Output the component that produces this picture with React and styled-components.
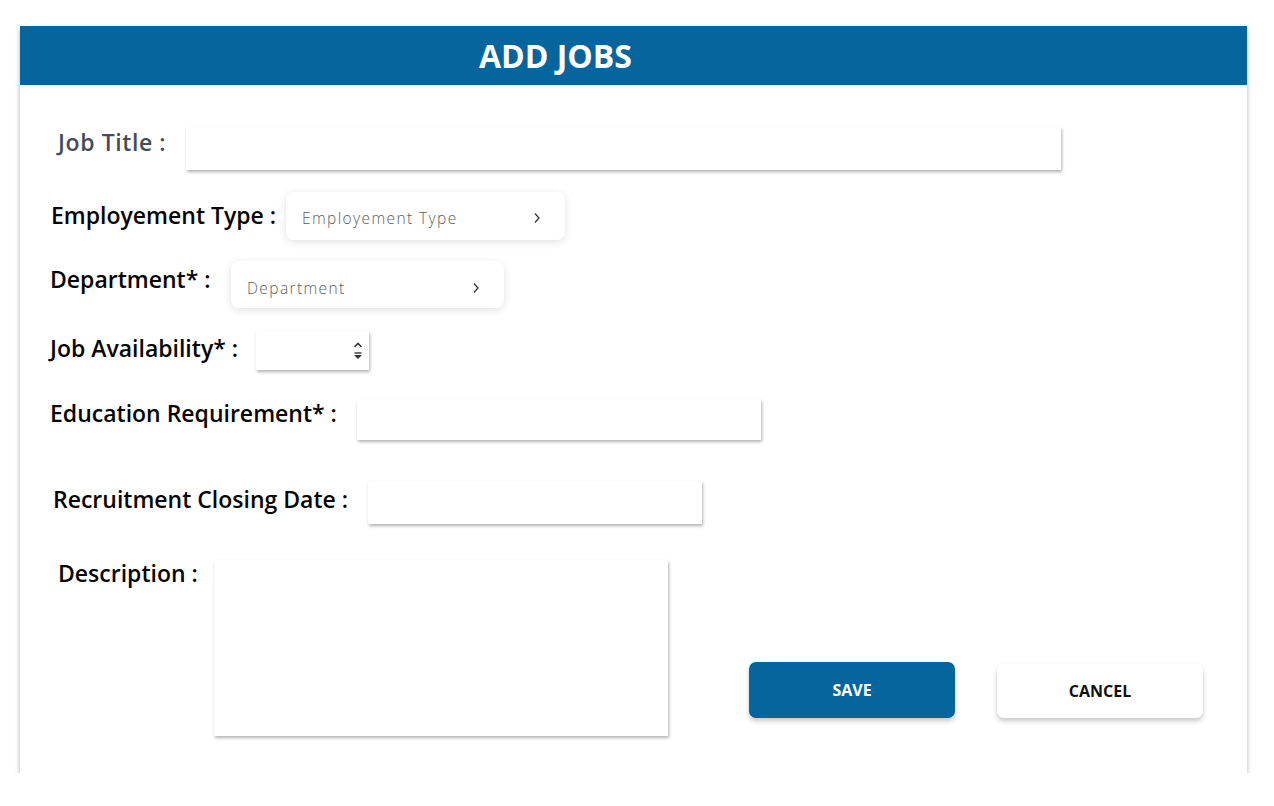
import React from 'react';
import styled, { createGlobalStyle } from 'styled-components';

const GlobalStyle = createGlobalStyle`
    body {
        margin: 0;
        background: #ffffff;
        font-family: 'Open Sans', sans-serif;
    }
`;

const Card = styled.div`
    width: 1227px;
    margin: 26px 0 0 20px;
    background: #ffffff;
    box-shadow: 0 3px 5px rgba(0, 0, 0, 0.3);
`;

const Header = styled.div`
    height: 59px;
    background-color: #05659c;
    display: flex;
    align-items: center;
    padding-left: 459px;
    color: #ffffff;
    font-family: 'Open Sans', sans-serif;
    font-weight: 700;
    font-size: 32px;
`;

const Body = styled.div`
    display: flex;
    flex-direction: column;
    padding: 0 0 37px 0;
`;

const Row = styled.div`
    display: flex;
    align-items: center;
    margin-top: ${({ $top }) => $top}px;
    padding-left: ${({ $left }) => $left}px;
`;

const Label = styled.label`
    flex: none;
    width: ${({ $width }) => $width}px;
    margin-bottom: ${({ $lift }) => $lift || 0}px;
    font-size: 23px;
    line-height: 1.2;
    font-weight: 600;
    letter-spacing: ${({ $muted }) => ($muted ? 0.6 : 0)}px;
    color: ${({ $muted }) => ($muted ? '#464c57' : '#050505')};
    white-space: nowrap;
`;

const TextBox = styled.div`
    flex: none;
    width: ${({ $width }) => $width}px;
    height: ${({ $height }) => $height}px;
    background: #ffffff;
    box-shadow: 1px 2px 3px rgba(0, 0, 0, 0.3);
    position: relative;
`;

const Select = styled.div`
    flex: none;
    width: ${({ $width }) => $width}px;
    height: ${({ $height }) => $height}px;
    box-sizing: border-box;
    padding: ${({ $pt }) => $pt || 0}px 24px 0 16px;
    display: flex;
    align-items: center;
    justify-content: space-between;
    background: #ffffff;
    border-radius: 8px;
    box-shadow: 0 2px 8px rgba(0, 0, 0, 0.12);
    font-family: 'Open Sans', sans-serif;
    font-weight: 300;
    font-size: 15.5px;
    letter-spacing: 1.4px;
    color: #5c5c5c;
`;

const Spinner = styled.svg`
    position: absolute;
    right: 6px;
    top: 10px;
`;

const Bottom = styled.div`
    display: flex;
    align-items: flex-start;
    margin-top: 36px;
    padding-left: 38px;
`;

const Buttons = styled.div`
    display: flex;
    align-items: flex-end;
    gap: 42px;
    margin-left: 81px;
    margin-top: 102px;
`;

const Button = styled.button`
    width: 206px;
    height: ${({ $primary }) => ($primary ? 56 : 54)}px;
    border: none;
    border-radius: 7px;
    background-color: ${({ $primary }) => ($primary ? '#05659c' : '#ffffff')};
    color: ${({ $primary }) => ($primary ? '#ffffff' : '#111111')};
    font-family: 'Open Sans', sans-serif;
    font-weight: 700;
    font-size: 16px;
    box-shadow: 0 3px 5px rgba(0, 0, 0, 0.22);
    cursor: pointer;
`;

const Chevron = () => (
    <svg width="8" height="12" viewBox="0 0 8 12">
        <path d="M2 1.5 L6 6 L2 10.5" fill="none" stroke="#333" strokeWidth="1.3" />
    </svg>
);

export default function App() {
    return (
        <>
            <GlobalStyle />
            <Card>
                <Header>ADD JOBS</Header>
                <Body>
                    <Row $top={42} $left={38}>
                        <Label $width={128} $lift={11} $muted>Job Title :</Label>
                        <TextBox $width={875} $height={43} />
                    </Row>
                    <Row $top={22} $left={31}>
                        <Label $width={235} $lift={1}>Employement Type :</Label>
                        <Select $width={279} $height={48} $pt={4}>
                            Employement Type
                            <Chevron />
                        </Select>
                    </Row>
                    <Row $top={21} $left={30}>
                        <Label $width={181} $lift={10}>Department* :</Label>
                        <Select $width={273} $height={47} $pt={6}>
                            Department
                            <Chevron />
                        </Select>
                    </Row>
                    <Row $top={23} $left={30}>
                        <Label $width={206} $lift={3}>Job Availability* :</Label>
                        <TextBox $width={113} $height={39}>
                            <Spinner width="10" height="20" viewBox="0 0 10 20">
                                <path d="M1.5 6 L5 2.5 L8.5 6" fill="none" stroke="#333" strokeWidth="1.6" />
                                <path d="M1.5 12 H8.5" stroke="#333" strokeWidth="1.4" />
                                <path d="M1 14 H9 L5 18 Z" fill="#333" />
                            </Spinner>
                        </TextBox>
                    </Row>
                    <Row $top={29} $left={30}>
                        <Label $width={307} $lift={12}>Education Requirement* :</Label>
                        <TextBox $width={404} $height={41} />
                    </Row>
                    <Row $top={41} $left={33}>
                        <Label $width={315} $lift={5}>Recruitment Closing Date :</Label>
                        <TextBox $width={334} $height={43} />
                    </Row>
                    <Bottom>
                        <Label $width={156}>Description :</Label>
                        <TextBox $width={454} $height={176} />
                        <Buttons>
                            <Button $primary>SAVE</Button>
                            <Button>CANCEL</Button>
                        </Buttons>
                    </Bottom>
                </Body>
            </Card>
        </>
    );
}
